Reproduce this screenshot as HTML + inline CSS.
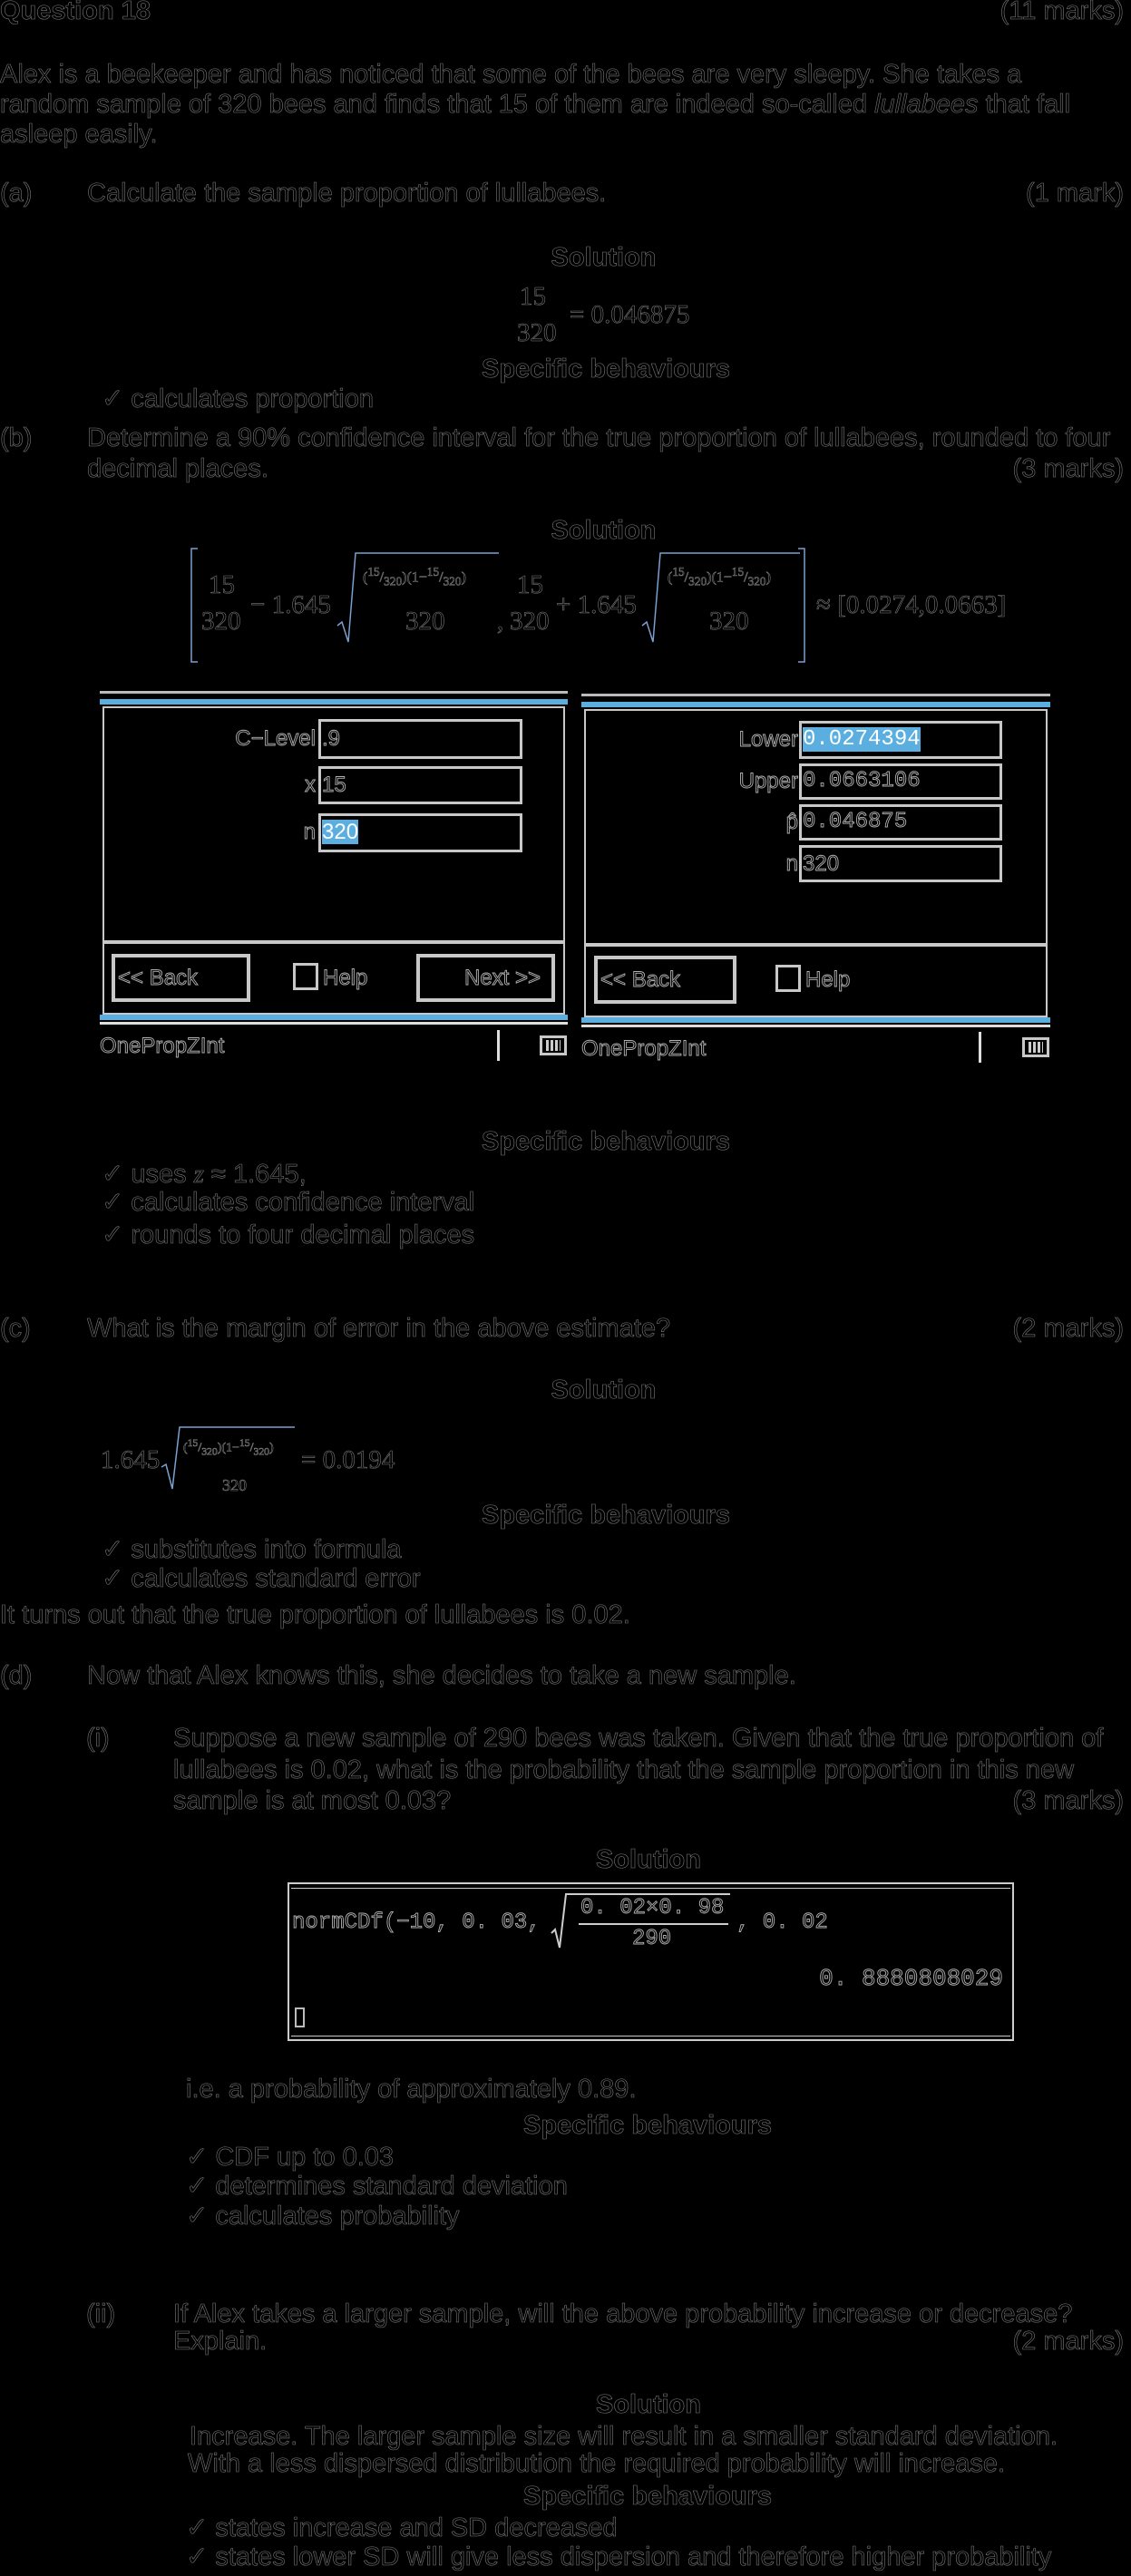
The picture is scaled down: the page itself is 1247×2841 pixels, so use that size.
<!DOCTYPE html>
<html><head><meta charset="utf-8">
<style>
html,body{margin:0;padding:0;background:#000;}
body{width:1247px;height:2841px;position:relative;overflow:hidden;}
.t{position:absolute;white-space:nowrap;line-height:33px;font-family:"Liberation Sans",sans-serif;font-size:29px;color:#000;-webkit-text-stroke:0.6px #7a7a7a;}
.b{font-weight:bold;}
.r{text-align:right;}
.m{font-family:"Liberation Serif",serif;}
.c{position:absolute;}
.box{position:absolute;border:3px solid #c8c8c8;box-sizing:border-box;}
.cal{font-family:"Liberation Sans",sans-serif;font-size:24px;line-height:30px;position:absolute;white-space:nowrap;color:#000;-webkit-text-stroke:0.9px #b0b0b0;}
.mono{font-family:"Liberation Mono",monospace;}
.sel{background:#5aaee0;color:#fff;-webkit-text-stroke:0;}
</style></head><body>

<div class="t b" style="left:0;top:-4px;">Question 18</div>
<div class="t r" style="right:8px;top:-4px;">(11 marks)</div>

<div class="t" style="left:0;top:66px;">Alex is a beekeeper and has noticed that some of the bees are very sleepy. She takes a</div>
<div class="t" style="left:0;top:99px;">random sample of 320 bees and finds that 15 of them are indeed so-called <i>lullabees</i> that fall</div>
<div class="t" style="left:0;top:132px;">asleep easily.</div>

<div class="t" style="left:0;top:197px;">(a)</div>
<div class="t" style="left:96px;top:197px;">Calculate the sample proportion of lullabees.</div>
<div class="t r" style="right:8px;top:197px;">(1 mark)</div>

<div class="t b" style="left:0;width:1247px;text-align:center;top:268px;margin-left:42px;">Solution</div>
<div class="t m" style="left:573px;top:311px;">15</div>
<div class="t m" style="left:570px;top:351px;">320</div>
<div class="t m" style="left:628px;top:331px;">= 0.046875</div>
<div class="t b" style="left:531px;top:391px;">Specific behaviours</div>
<div class="t" style="left:112px;top:424px;">✓ calculates proportion</div>

<div class="t" style="left:0;top:467px;">(b)</div>
<div class="t" style="left:96px;top:467px;">Determine a 90% confidence interval for the true proportion of lullabees, rounded to four</div>
<div class="t" style="left:96px;top:501px;">decimal places.</div>
<div class="t r" style="right:8px;top:501px;">(3 marks)</div>

<div class="t b" style="left:0;width:1247px;text-align:center;top:569px;margin-left:42px;">Solution</div>

<svg class="c" style="left:0;top:0" width="1247" height="760">
 <g fill="none" stroke="#7aa0d0" stroke-width="1.5">
  <path d="M218 605 L211 605 L211 730 L218 730"/>
  <path d="M880 605 L887 605 L887 730 L880 730"/>
  <path d="M372 690 L377 686 L384 708 L392 610 L550 610"/>
  <path d="M708 690 L713 686 L720 708 L728 610 L882 610"/>
 </g>
</svg>
<div class="t m" style="left:230px;top:629px;">15</div>
<div class="t m" style="left:222px;top:669px;">320</div>
<div class="t m" style="left:276px;top:651px;">− 1.645</div>
<div class="t m" style="left:400px;top:614px;font-size:16px;">(<sup>15</sup>/<sub>320</sub>)(1−<sup>15</sup>/<sub>320</sub>)</div>
<div class="t m" style="left:447px;top:669px;">320</div>
<div class="t m" style="left:548px;top:669px;">,</div>
<div class="t m" style="left:570px;top:629px;">15</div>
<div class="t m" style="left:562px;top:669px;">320</div>
<div class="t m" style="left:613px;top:651px;">+ 1.645</div>
<div class="t m" style="left:736px;top:614px;font-size:16px;">(<sup>15</sup>/<sub>320</sub>)(1−<sup>15</sup>/<sub>320</sub>)</div>
<div class="t m" style="left:782px;top:669px;">320</div>
<div class="t m" style="left:900px;top:651px;">≈ [0.0274,0.0663]</div>

<!-- left calc -->
<div class="c" style="left:110px;top:762px;width:516px;height:3px;background:#bbb"></div>
<div class="c" style="left:110px;top:771px;width:516px;height:6px;background:#5aaee0"></div>
<div class="box" style="left:113px;top:779px;width:510px;height:260px;border-width:2px;"></div>
<div class="box" style="left:113px;top:1039px;width:510px;height:80px;border-width:2px;"></div>
<div class="c" style="left:110px;top:1119px;width:516px;height:6px;background:#5aaee0"></div>
<div class="c" style="left:110px;top:1127px;width:516px;height:3px;background:#ddd"></div>
<div class="cal" style="right:899px;top:800px;">C−Level</div>
<div class="box" style="left:351px;top:793px;width:225px;height:44px;"></div>
<div class="cal" style="left:355px;top:800px;">.9</div>
<div class="cal" style="right:899px;top:851px;">x</div>
<div class="box" style="left:351px;top:845px;width:225px;height:42px;"></div>
<div class="cal" style="left:355px;top:851px;">15</div>
<div class="cal" style="right:899px;top:903px;">n</div>
<div class="box" style="left:351px;top:897px;width:225px;height:43px;"></div>
<div class="cal" style="left:355px;top:903px;"><span class="sel">320</span></div>
<div class="box" style="left:123px;top:1052px;width:153px;height:53px;border-width:4px;"></div>
<div class="cal" style="left:130px;top:1064px;">&lt;&lt; Back</div>
<div class="box" style="left:323px;top:1062px;width:28px;height:30px;"></div>
<div class="cal" style="left:356px;top:1064px;">Help</div>
<div class="box" style="left:459px;top:1052px;width:153px;height:53px;border-width:4px;"></div>
<div class="cal" style="left:512px;top:1064px;">Next &gt;&gt;</div>
<div class="cal" style="left:110px;top:1139px;">OnePropZInt</div>
<div class="c" style="left:548px;top:1136px;width:3px;height:34px;background:#ddd"></div>
<div class="box" style="left:595px;top:1142px;width:30px;height:22px;"></div>
<div class="c" style="left:602px;top:1147px;width:16px;height:12px;background:repeating-linear-gradient(90deg,#ccc 0 3px,#000 3px 5px)"></div>

<!-- right calc -->
<div class="c" style="left:641px;top:765px;width:517px;height:3px;background:#bbb"></div>
<div class="c" style="left:641px;top:774px;width:517px;height:6px;background:#5aaee0"></div>
<div class="box" style="left:644px;top:782px;width:511px;height:260px;border-width:2px;"></div>
<div class="box" style="left:644px;top:1042px;width:511px;height:80px;border-width:2px;"></div>
<div class="c" style="left:641px;top:1122px;width:517px;height:6px;background:#5aaee0"></div>
<div class="c" style="left:641px;top:1130px;width:517px;height:3px;background:#ddd"></div>
<div class="cal" style="right:367px;top:801px;">Lower</div>
<div class="box" style="left:881px;top:795px;width:224px;height:42px;"></div>
<div class="cal mono" style="left:885px;top:801px;"><span class="sel">0.0274394</span></div>
<div class="cal" style="right:367px;top:847px;">Upper</div>
<div class="box" style="left:881px;top:842px;width:224px;height:40px;"></div>
<div class="cal mono" style="left:885px;top:847px;">0.0663106</div>
<div class="cal" style="right:367px;top:892px;">p̂</div>
<div class="box" style="left:881px;top:887px;width:224px;height:40px;"></div>
<div class="cal mono" style="left:885px;top:892px;">0.046875</div>
<div class="cal" style="right:367px;top:938px;">n</div>
<div class="box" style="left:881px;top:932px;width:224px;height:41px;"></div>
<div class="cal" style="left:885px;top:938px;">320</div>
<div class="box" style="left:655px;top:1054px;width:157px;height:53px;border-width:4px;"></div>
<div class="cal" style="left:662px;top:1066px;">&lt;&lt; Back</div>
<div class="box" style="left:855px;top:1064px;width:28px;height:30px;"></div>
<div class="cal" style="left:888px;top:1066px;">Help</div>
<div class="cal" style="left:641px;top:1142px;">OnePropZInt</div>
<div class="c" style="left:1079px;top:1138px;width:3px;height:34px;background:#ddd"></div>
<div class="box" style="left:1127px;top:1144px;width:30px;height:22px;"></div>
<div class="c" style="left:1134px;top:1149px;width:16px;height:12px;background:repeating-linear-gradient(90deg,#ccc 0 3px,#000 3px 5px)"></div>

<div class="t b" style="left:531px;top:1243px;">Specific behaviours</div>
<div class="t" style="left:112px;top:1279px;">✓ uses <i style="font-family:'Liberation Serif',serif">z</i> ≈ 1.645,</div>
<div class="t" style="left:112px;top:1310px;">✓ calculates confidence interval</div>
<div class="t" style="left:112px;top:1346px;">✓ rounds to four decimal places</div>

<div class="t" style="left:0;top:1449px;">(c)</div>
<div class="t" style="left:96px;top:1449px;">What is the margin of error in the above estimate?</div>
<div class="t r" style="right:8px;top:1449px;">(2 marks)</div>

<div class="t b" style="left:0;width:1247px;text-align:center;top:1517px;margin-left:42px;">Solution</div>
<svg class="c" style="left:0;top:1560px" width="500" height="100">
 <path d="M178 58 L183 55 L190 82 L198 14 L325 14" fill="none" stroke="#7aa0d0" stroke-width="1.5"/>
</svg>
<div class="t m" style="left:111px;top:1594px;">1.645</div>
<div class="t m" style="left:202px;top:1575px;font-size:14px;">(<sup>15</sup>/<sub>320</sub>)(1−<sup>15</sup>/<sub>320</sub>)</div>
<div class="t m" style="left:245px;top:1622px;font-size:18px;">320</div>
<div class="t m" style="left:332px;top:1594px;">= 0.0194</div>

<div class="t b" style="left:531px;top:1655px;">Specific behaviours</div>
<div class="t" style="left:112px;top:1693px;">✓ substitutes into formula</div>
<div class="t" style="left:112px;top:1725px;">✓ calculates standard error</div>
<div class="t" style="left:0;top:1765px;">It turns out that the true proportion of lullabees is 0.02.</div>

<div class="t" style="left:0;top:1832px;">(d)</div>
<div class="t" style="left:96px;top:1832px;">Now that Alex knows this, she decides to take a new sample.</div>

<div class="t" style="left:95px;top:1901px;">(i)</div>
<div class="t" style="left:191px;top:1901px;">Suppose a new sample of 290 bees was taken. Given that the true proportion of</div>
<div class="t" style="left:191px;top:1936px;">lullabees is 0.02, what is the probability that the sample proportion in this new</div>
<div class="t" style="left:191px;top:1970px;">sample is at most 0.03?</div>
<div class="t r" style="right:8px;top:1970px;">(3 marks)</div>

<div class="t b" style="left:657px;top:2035px;">Solution</div>
<div class="c" style="left:317px;top:2076px;width:801px;height:175px;border:2px solid #ccc;box-sizing:border-box;"></div>
<div class="c" style="left:321px;top:2082px;width:793px;height:1px;background:#ccc"></div>
<div class="c" style="left:321px;top:2245px;width:793px;height:1px;background:#ccc"></div>
<svg class="c" style="left:600px;top:2080px" width="220" height="70">
 <path d="M8 52 L12 48 L17 68 L24 9 L205 9" fill="none" stroke="#ccc" stroke-width="2"/>
 <path d="M38 42 L203 42" stroke="#ccc" stroke-width="2"/>
</svg>
<div class="cal mono" style="left:322px;top:2106px;font-size:24px;">normCDf(−10, 0. 03,</div>
<div class="cal mono" style="left:640px;top:2090px;font-size:24px;">0. 02×0. 98</div>
<div class="cal mono" style="left:697px;top:2124px;font-size:24px;">290</div>
<div class="cal mono" style="left:812px;top:2106px;font-size:24px;">, 0. 02</div>
<div class="cal mono" style="right:141px;top:2167px;font-size:26px;">0. 8880808029</div>
<div class="c" style="left:325px;top:2214px;width:11px;height:22px;border:2px solid #bbb;box-sizing:border-box;"></div>

<div class="t" style="left:205px;top:2288px;">i.e. a probability of approximately 0.89.</div>
<div class="t b" style="left:577px;top:2328px;">Specific behaviours</div>
<div class="t" style="left:205px;top:2363px;">✓ CDF up to 0.03</div>
<div class="t" style="left:205px;top:2395px;">✓ determines standard deviation</div>
<div class="t" style="left:205px;top:2428px;">✓ calculates probability</div>

<div class="t" style="left:95px;top:2536px;">(ii)</div>
<div class="t" style="left:191px;top:2536px;">If Alex takes a larger sample, will the above probability increase or decrease?</div>
<div class="t" style="left:191px;top:2566px;">Explain.</div>
<div class="t r" style="right:8px;top:2566px;">(2 marks)</div>

<div class="t b" style="left:657px;top:2636px;">Solution</div>
<div class="t" style="left:209px;top:2671px;">Increase. The larger sample size will result in a smaller standard deviation.</div>
<div class="t" style="left:207px;top:2701px;">With a less dispersed distribution the required probability will increase.</div>
<div class="t b" style="left:577px;top:2737px;">Specific behaviours</div>
<div class="t" style="left:205px;top:2772px;">✓ states increase and SD decreased</div>
<div class="t" style="left:205px;top:2804px;">✓ states lower SD will give less dispersion and therefore higher probability</div>

</body></html>
